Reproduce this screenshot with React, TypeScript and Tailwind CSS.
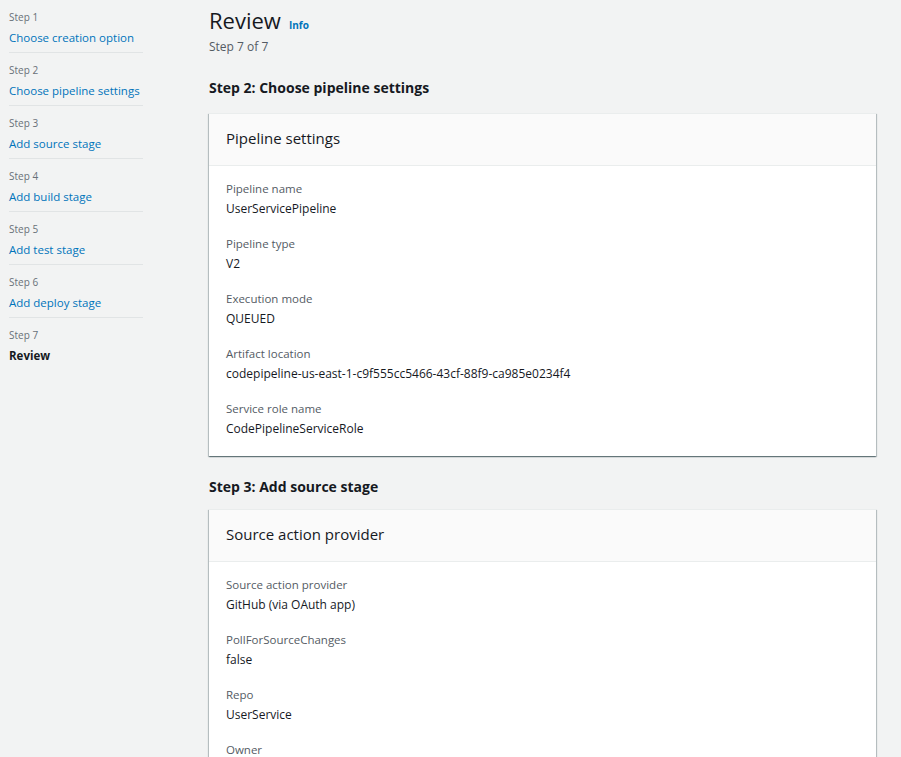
import React from "react";

const steps = [
  { n: 1, label: "Choose creation option" },
  { n: 2, label: "Choose pipeline settings" },
  { n: 3, label: "Add source stage" },
  { n: 4, label: "Add build stage" },
  { n: 5, label: "Add test stage" },
  { n: 6, label: "Add deploy stage" },
];

function Field({ label, value }: { label: string; value: string }) {
  return (
    <div className="flex flex-col gap-[2px]">
      <div className="text-[11.5px] leading-[18px] text-[#545b64]">{label}</div>
      <div className="text-[12px] leading-[18px] text-[#16191f]">{value}</div>
    </div>
  );
}

function Card({ title, fields }: { title: string; fields: [string, string][] }) {
  return (
    <div className="bg-white border-t border-[#eaeded] shadow-[0_1px_1px_0_rgba(0,28,36,0.35),1px_1px_1px_0_rgba(0,28,36,0.2),-1px_1px_1px_0_rgba(0,28,36,0.2)]">
      <div className="bg-[#fafafa] border-b border-[#eaeded] h-[52px] flex items-center px-[17px] pb-[2px]">
        <span className="text-[15px] text-[#16191f]">{title}</span>
      </div>
      <div className="px-[17px] pt-[14px] pb-[18px] flex flex-col gap-[17px]">
        {fields.map(([l, v]) => (
          <Field key={l} label={l} value={v} />
        ))}
      </div>
    </div>
  );
}

export default function App() {
  return (
    <div
      className="h-[757px] w-full bg-[#f2f3f3] flex overflow-hidden"
      style={{ fontFamily: '"Open Sans", "Noto Sans", sans-serif' }}
    >
      <nav className="w-[209px] shrink-0 pl-[9px]">
        <div className="w-[134px] flex flex-col">
          {steps.map((s) => (
            <div key={s.n} className="pt-[9px] pb-[5px] border-b border-[#e1e4e5] flex flex-col gap-[4px]">
              <div className="text-[10px] leading-[16px] text-[#687078]">Step {s.n}</div>
              <div className="text-[11.5px] leading-[18px] text-[#0073bb] whitespace-nowrap">{s.label}</div>
            </div>
          ))}
          <div className="pt-[9px] pb-[5px] flex flex-col gap-[4px]">
            <div className="text-[10px] leading-[16px] text-[#687078]">Step 7</div>
            <div className="text-[11.5px] leading-[18px] text-[#16191f] font-bold">Review</div>
          </div>
        </div>
      </nav>
      <main className="flex-1 pr-[25px] pt-[6px]">
        <div className="flex items-baseline gap-[8px]">
          <h1 className="text-[22px] leading-[28px] text-[#16191f]">Review</h1>
          <span className="text-[10px] font-bold text-[#0073bb]">Info</span>
        </div>
        <div className="mt-[4px] text-[12px] leading-[18px] text-[#545b64]">Step 7 of 7</div>
        <h2 className="mt-[22px] text-[14px] leading-[20px] font-bold text-[#16191f]">
          Step 2: Choose pipeline settings
        </h2>
        <div className="mt-[15px]">
          <Card
            title="Pipeline settings"
            fields={[
              ["Pipeline name", "UserServicePipeline"],
              ["Pipeline type", "V2"],
              ["Execution mode", "QUEUED"],
              ["Artifact location", "codepipeline-us-east-1-c9f555cc5466-43cf-88f9-ca985e0234f4"],
              ["Service role name", "CodePipelineServiceRole"],
            ]}
          />
        </div>
        <h2 className="mt-[21px] text-[14px] leading-[20px] font-bold text-[#16191f]">
          Step 3: Add source stage
        </h2>
        <div className="mt-[12px]">
          <Card
            title="Source action provider"
            fields={[
              ["Source action provider", "GitHub (via OAuth app)"],
              ["PollForSourceChanges", "false"],
              ["Repo", "UserService"],
              ["Owner", "UserServiceOwner"],
            ]}
          />
        </div>
      </main>
    </div>
  );
}
